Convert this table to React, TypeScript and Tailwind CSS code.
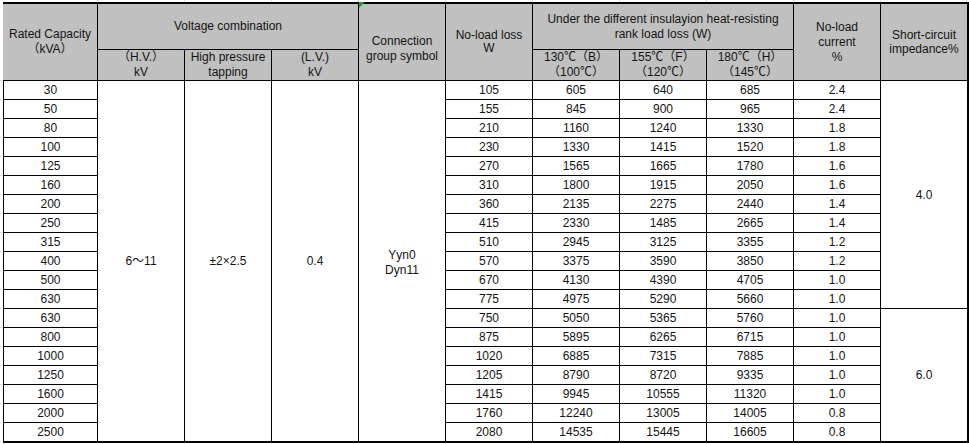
import React from "react";

const rows: [string, string, string, string, string, string][] = [
  ["30", "105", "605", "640", "685", "2.4"],
  ["50", "155", "845", "900", "965", "2.4"],
  ["80", "210", "1160", "1240", "1330", "1.8"],
  ["100", "230", "1330", "1415", "1520", "1.8"],
  ["125", "270", "1565", "1665", "1780", "1.6"],
  ["160", "310", "1800", "1915", "2050", "1.6"],
  ["200", "360", "2135", "2275", "2440", "1.4"],
  ["250", "415", "2330", "1485", "2665", "1.4"],
  ["315", "510", "2945", "3125", "3355", "1.2"],
  ["400", "570", "3375", "3590", "3850", "1.2"],
  ["500", "670", "4130", "4390", "4705", "1.0"],
  ["630", "775", "4975", "5290", "5660", "1.0"],
  ["630", "750", "5050", "5365", "5760", "1.0"],
  ["800", "875", "5895", "6265", "6715", "1.0"],
  ["1000", "1020", "6885", "7315", "7885", "1.0"],
  ["1250", "1205", "8790", "8720", "9335", "1.0"],
  ["1600", "1415", "9945", "10555", "11320", "1.0"],
  ["2000", "1760", "12240", "13005", "14005", "0.8"],
  ["2500", "2080", "14535", "15445", "16605", "0.8"],
];

const hc =
  "bg-[#c0c0c0] border-r border-b border-black flex items-center justify-center text-center leading-[15px]";

export default function App() {
  const cells: React.ReactNode[] = [];
  rows.forEach((r, i) => {
    const last = i === rows.length - 1;
    const b = last ? "" : "border-b";
    const cell = "border-r border-black flex items-center justify-center";
    cells.push(
      <div key={`a${i}`} className={`${cell} border-l ${b}`}>
        {r[0]}
      </div>
    );
    if (i === 0) {
      cells.push(
        <div key="hv" className={`${cell} row-span-19`}>
          6～11
        </div>,
        <div key="tap" className={`${cell} row-span-19`}>
          ±2×2.5
        </div>,
        <div key="lv" className={`${cell} row-span-19`}>
          0.4
        </div>,
        <div key="conn" className={`${cell} row-span-19 flex-col leading-[15px] pt-[3px]`}>
          <span>Yyn0</span>
          <span>Dyn11</span>
        </div>
      );
    }
    for (let j = 1; j <= 5; j++) {
      cells.push(
        <div key={`c${i}-${j}`} className={`${cell} ${b}`}>
          {r[j]}
        </div>
      );
    }
    if (i === 0) {
      cells.push(
        <div key="sc1" className="row-span-12 border-b border-black flex items-center justify-center">
          4.0
        </div>
      );
    }
    if (i === 12) {
      cells.push(
        <div key="sc2" className="row-span-7 flex items-center justify-center">
          6.0
        </div>
      );
    }
  });

  return (
    <div
      className="w-[969px] h-[444px] bg-white overflow-hidden relative text-[12px] text-[#141414]"
      style={{ fontFamily: '"Liberation Sans", Arial, "Noto Sans CJK SC", sans-serif' }}
    >
      <div className="flex">
        {/* left gridline strip */}
        <div className="w-[3px] flex flex-col">
          <div className="h-[81px] border-b border-[#dcdcdc]" />
          {rows.map((_, i) => (
            <div key={i} className="h-[19px] border-b border-[#dcdcdc]" />
          ))}
        </div>
        <div className="flex flex-col">
          {/* top gridline strip */}
          <div className="h-[2px] grid grid-cols-[95px_repeat(9,87px)_86px]">
            {Array.from({ length: 11 }).map((_, i) => (
              <div key={i} className="border-r border-[#dcdcdc]" />
            ))}
          </div>
          <div className="grid grid-cols-[95px_repeat(9,87px)_86px] grid-rows-[46px_31px_repeat(18,19px)_18px] border-t-2 border-r-2 border-b-2 border-black">
            <div className={`${hc} row-span-2`}>
              <div>
                Rated Capacity
                <br />（kVA）
              </div>
            </div>
            <div className={`${hc} col-span-3`}>Voltage combination</div>
            <div className={`${hc} row-span-2 pt-[14px]`}>
              <div>
                Connection
                <br />
                group symbol
              </div>
            </div>
            <div className={`${hc} row-span-2`}>
              <div className="leading-[13px]">
                No-load loss
                <br />W
              </div>
            </div>
            <div className={`${hc} col-span-3`}>
              <div>
                Under the different insulayion heat-resisting
                <br />
                rank load loss (W)
              </div>
            </div>
            <div className={`${hc} row-span-2`}>
              <div>
                No-load
                <br />
                current
                <br />%
              </div>
            </div>
            <div className="bg-[#c0c0c0] border-b border-black flex items-center justify-center text-center leading-[14px] row-span-2">
              <div>
                Short-circuit
                <br />
                impedance%
              </div>
            </div>
            <div className={hc}>
              <div>
                （H.V.）
                <br />
                kV
              </div>
            </div>
            <div className={hc}>
              <div>
                High pressure
                <br />
                tapping
              </div>
            </div>
            <div className={hc}>
              <div>
                (L.V.)
                <br />
                kV
              </div>
            </div>
            <div className={hc}>
              <div>
                130℃（B）
                <br />
                （100℃）
              </div>
            </div>
            <div className={hc}>
              <div>
                155℃（F）
                <br />
                （120℃）
              </div>
            </div>
            <div className={hc}>
              <div>
                180℃（H）
                <br />
                （145℃）
              </div>
            </div>
            {cells}
          </div>
        </div>
      </div>
      {/* green error indicator */}
      <svg className="absolute left-[359px] top-[2px]" width="6" height="6" viewBox="0 0 6 6">
        <polygon points="0,0 6,0 0,6" fill="#1f9a2a" />
      </svg>
    </div>
  );
}
